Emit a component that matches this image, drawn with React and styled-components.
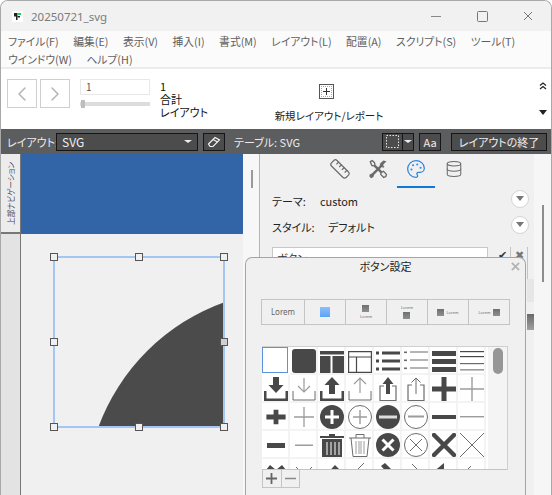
import React from 'react';
import styled, { createGlobalStyle } from 'styled-components';
import { ChevronLeft, ChevronRight, Ruler, Palette, Database } from 'lucide-react';

const GlobalStyle = createGlobalStyle`
  html, body {
    margin: 0;
    padding: 0;
    background: #fff;
  }
  * {
    box-sizing: border-box;
  }
`;

const Window = styled.div`
  position: relative;
  width: 552px;
  height: 495px;
  overflow: hidden;
  display: flex;
  flex-direction: column;
  background: #fff;
  border-top: 1px solid #a8a8a8;
  border-left: 1px solid #a8a8a8;
  border-right: 1px solid #a8a8a8;
  border-radius: 8px 8px 0 0;
  font-family: "Noto Sans CJK JP", "Noto Sans", sans-serif;
  font-feature-settings: "palt";
  font-size: 11px;
  color: #222;
`;

const TitleBar = styled.div`
  height: 30px;
  flex: none;
  display: flex;
  align-items: center;
  padding-left: 11px;
  background: #f1f1f1;
`;

const AppTitle = styled.span`
  margin-left: 8px;
  font-family: "Noto Sans", sans-serif;
  font-size: 11.5px;
  color: #7b7b7b;
`;

const WindowControls = styled.div`
  margin-left: auto;
  display: flex;
`;

const WindowControl = styled.div`
  width: 46px;
  height: 30px;
  display: flex;
  align-items: center;
  justify-content: center;
`;

const MenuBar = styled.div`
  height: 38px;
  flex: none;
  padding: 1px 0 0 7px;
  display: flex;
  flex-wrap: wrap;
  align-content: flex-start;
  column-gap: 14.5px;
  background: #fbfbfb;
  border-bottom: 2px solid #ececec;
`;

const MenuItem = styled.span`
  font-size: 10.8px;
  line-height: 18px;
  color: #5f5f5f;
  white-space: nowrap;
`;

const MenuBreak = styled.span`
  flex-basis: 100%;
  height: 0;
`;

const Toolbar = styled.div`
  height: 60px;
  flex: none;
  display: flex;
  padding: 10px 0 0 6px;
  background: #fff;
`;

const NavButton = styled.div`
  width: 30px;
  height: 29px;
  margin-right: 3px;
  display: flex;
  align-items: center;
  justify-content: center;
  border: 1px solid #cfcfcf;
  color: #b4b4b4;
`;

const Pager = styled.div`
  width: 70px;
  margin-left: 7px;
`;

const PageInput = styled.div`
  height: 16px;
  padding-left: 5px;
  border: 1px solid #e8e8e8;
  font-size: 10px;
  line-height: 14px;
  color: #555;
`;

const Slider = styled.div`
  position: relative;
  height: 4px;
  margin-top: 7px;
  background: #dcdcdc;
`;

const SliderThumb = styled.div`
  position: absolute;
  left: 1px;
  top: -2px;
  width: 4px;
  height: 8px;
  background: #bdbdbd;
`;

const PageInfo = styled.div`
  width: 70px;
  margin-left: 10px;
  margin-top: 1px;
  font-size: 11px;
  line-height: 13px;
  color: #111;
`;

const NewLayout = styled.div`
  width: 110px;
  margin-left: 44px;
  display: flex;
  flex-direction: column;
  align-items: center;
  font-size: 10.5px;
  line-height: 16px;
  color: #222;
  white-space: nowrap;
`;

const NewLayoutIcon = styled.div`
  width: 15px;
  height: 15px;
  margin: 5px 5px 9px 0;
  display: flex;
  align-items: center;
  justify-content: center;
  border: 1px solid #555;
  outline: 1px dotted #aaa;
  outline-offset: -3px;
`;

const ToolbarEnd = styled.div`
  margin: 3px 0 0 auto;
  width: 16px;
  height: 33px;
  display: flex;
  flex-direction: column;
  justify-content: space-between;
  align-items: center;
`;

const LayoutBar = styled.div`
  height: 25px;
  flex: none;
  display: flex;
  align-items: center;
  padding: 0 4px 0 6px;
  background: #5b5d5f;
  color: #ececec;
  font-size: 11px;
`;

const DarkControl = styled.div`
  height: 18px;
  flex: none;
  width: ${(p) => p.$w}px;
  margin-left: ${(p) => p.$ml || 0}px;
  display: flex;
  align-items: center;
  justify-content: ${(p) => (p.$between ? 'space-between' : 'center')};
  padding: ${(p) => (p.$between ? '0 5px' : '0')};
  border: 1px solid #161616;
  background: #4c4c4c;
  color: #efefef;
  font-size: ${(p) => (p.$between ? 12 : 11)}px;
  white-space: nowrap;
`;

const BarLabel = styled.span`
  width: ${(p) => p.$w}px;
  flex: none;
  margin-left: ${(p) => p.$ml || 0}px;
  white-space: nowrap;
`;

const BarGroup = styled.div`
  margin-left: auto;
  display: flex;
`;

const Caret = styled.span`
  width: 0;
  height: 0;
  border-left: 4px solid transparent;
  border-right: 4px solid transparent;
  border-top: 3px solid #eee;
`;

const SplitCell = styled.span`
  height: 100%;
  width: ${(p) => p.$w}px;
  display: flex;
  align-items: center;
  justify-content: center;
  border-right: ${(p) => (p.$divided ? '1px solid #161616' : 'none')};
`;

const Workspace = styled.div`
  flex: 1;
  min-height: 0;
  display: flex;
`;

const Sidebar = styled.div`
  width: 20px;
  flex: none;
  display: flex;
  flex-direction: column;
  background: #e3e3e3;
  border-right: 1px solid #777;
`;

const SideTab = styled.div`
  height: 80px;
  flex: none;
  display: flex;
  align-items: center;
  justify-content: center;
  border-bottom: 2px solid #777;
  background: #ececec;
`;

const SideTabText = styled.span`
  writing-mode: vertical-rl;
  text-orientation: sideways;
  transform: rotate(180deg);
  font-size: 7.5px;
  line-height: 10px;
  color: #4a3a4a;
  white-space: nowrap;
`;

const Canvas = styled.div`
  width: 222px;
  flex: none;
  background: #f0f0f1;
`;

const HeaderPart = styled.div`
  height: 80px;
  background: #3264a8;
`;

const Selection = styled.div`
  position: relative;
  width: 172px;
  height: 172px;
  margin: 22px 0 0 32px;
`;

const ShapeSvg = styled.svg`
  display: block;
  width: 100%;
  height: 100%;
`;

const Handle = styled.span`
  position: absolute;
  left: ${(p) => p.$x}px;
  top: ${(p) => p.$y}px;
  width: 8px;
  height: 8px;
  margin: -4px 0 0 -4px;
  border: 1px solid #555;
  background: ${(p) => (p.$dim ? '#cfcfcf' : '#f0f0f1')};
`;

const Gutter = styled.div`
  width: 17px;
  flex: none;
  padding: 16px 0 0 8px;
  background: #f7f7f7;
  border-right: 1px solid #b5b5b5;
`;

const GutterThumb = styled.div`
  width: 2px;
  height: 18px;
  background: #9a9a9a;
`;

const Inspector = styled.div`
  flex: 1;
  display: flex;
  background: #f0f0f0;
`;

const Panel = styled.div`
  width: 274px;
  flex: none;
`;

const TabRow = styled.div`
  height: 34px;
  display: flex;
  justify-content: center;
`;

const Tab = styled.div`
  width: 38px;
  display: flex;
  align-items: center;
  justify-content: center;
  padding-bottom: 3px;
  color: ${(p) => (p.$active ? '#2c84e0' : '#6b6b6b')};
  border-bottom: 2px solid ${(p) => (p.$active ? '#0f78d8' : 'transparent')};
`;

const PropRow = styled.div`
  height: 26px;
  display: flex;
  align-items: center;
  padding: 0 5px 0 12px;
  font-size: 11px;
  color: #222;
`;

const PropLabel = styled.span`
  width: ${(p) => p.$w}px;
  flex: none;
`;

const RoundButton = styled.span`
  width: 18px;
  height: 18px;
  margin-left: auto;
  margin-top: -5px;
  display: flex;
  align-items: center;
  justify-content: center;
  border-radius: 50%;
  background: #fff;
  border: 1px solid #d4d4d4;
`;

const RoundCaret = styled.span`
  width: 0;
  height: 0;
  border-left: 4px solid transparent;
  border-right: 4px solid transparent;
  border-top: 5px solid #777;
`;

const NameRow = styled.div`
  display: flex;
  margin: 7px 0 0 12px;
  height: 24px;
`;

const NameInput = styled.div`
  width: 216px;
  height: 22px;
  padding: 2px 0 0 4px;
  background: #fff;
  border: 1px solid #c8c8c8;
  font-size: 11px;
  color: #333;
`;

const NameAction = styled.div`
  width: 17px;
  height: 32px;
  margin-left: ${(p) => p.$ml || 0}px;
  display: flex;
  justify-content: center;
  padding-top: 2px;
  border-right: 1px solid #c4c4c4;
  font-size: 11px;
  line-height: 11px;
  color: ${(p) => p.$color};
`;

const StripBehind = styled.div`
  margin: ${(p) => p.$mt}px 0 0 267px;
  width: 8px;
  height: ${(p) => p.$h}px;
  background: ${(p) => p.$bg};
`;

const OuterScroll = styled.div`
  flex: 1;
  padding: 51px 0 0 8px;
  background: #f6f6f6;
`;

const OuterThumb = styled.div`
  width: 2px;
  height: 77px;
  background: #8d8d8d;
`;

const Dialog = styled.div`
  position: absolute;
  left: 244px;
  top: 256px;
  width: 281px;
  height: 240px;
  padding: 0 15px;
  background: #f0f0f0;
  border: 1px solid #a5a5a5;
  border-bottom: none;
  border-radius: 7px 7px 0 0;
`;

const DialogHeader = styled.div`
  position: relative;
  height: 41px;
  margin-top: -1px;
  padding-top: 0;
  text-align: center;
  font-size: 11px;
  line-height: 18px;
  color: #222;
`;

const DialogClose = styled.span`
  position: absolute;
  right: -10px;
  top: 5px;
  display: flex;
`;

const PresetRow = styled.div`
  width: 249px;
  height: 26px;
  margin-top: 1px;
  display: flex;
  border: 1px solid #c4c4c4;
`;

const Preset = styled.div`
  flex: ${(p) => (p.$wide ? '43' : '41')} 0 0;
  display: flex;
  flex-direction: ${(p) => p.$dir};
  align-items: center;
  justify-content: center;
  gap: 2px;
  border-left: ${(p) => (p.$first ? 'none' : '1px solid #c4c4c4')};
`;

const PresetLabel = styled.span`
  font-family: "Noto Sans", sans-serif;
  font-size: ${(p) => (p.$big ? 8 : 4)}px;
  line-height: ${(p) => (p.$big ? 10 : 5)}px;
  color: #666;
`;

const PresetSwatch = styled.span`
  display: block;
  width: ${(p) => (p.$blue ? 10 : 7)}px;
  height: ${(p) => (p.$blue ? 10 : 7)}px;
  background: ${(p) =>
    p.$blue
      ? 'linear-gradient(#8cc0fb, #5da2f5)'
      : 'linear-gradient(#6f6f6f, #8f8f8f)'};
`;

const IconPicker = styled.div`
  display: flex;
  width: 246px;
  height: 124px;
  margin: 21px 0 0 1px;
  border-top: 1px solid #d0d0d0;
  border-right: 1px solid #d0d0d0;
  border-bottom: 1px solid #c4c4c4;
  overflow: hidden;
`;

const IconGrid = styled.div`
  width: 226px;
  flex: none;
  display: grid;
  grid-template-columns: repeat(8, 28px);
  grid-auto-rows: 28px;
  align-content: start;
  background: #fff;
`;

const IconCell = styled.div`
  display: flex;
  align-items: flex-end;
  justify-content: flex-end;
  background: #fff;
  border-right: 2px solid #f3f3f3;
  border-bottom: 2px solid #f3f3f3;
  ${(p) => p.$selected && 'box-shadow: inset 0 0 0 1px #5b94dc; border-color: #fff;'}
`;

const PickerScroll = styled.div`
  flex: 1;
  padding: 1px 0 0 5px;
  background: #f4f4f4;
`;

const PickerThumb = styled.div`
  width: 10px;
  height: 26px;
  border-radius: 5px;
  background: #969696;
`;

const StepperRow = styled.div`
  display: flex;
  width: 38px;
  height: 18px;
  margin-left: 1px;
  border: 1px solid #c4c4c4;
  border-top: none;
`;

const Stepper = styled.div`
  flex: 1;
  display: flex;
  align-items: center;
  justify-content: center;
  border-left: ${(p) => (p.$divided ? '1px solid #c4c4c4' : 'none')};
`;

const DARK = '#484848';
const THIN = '#6c6c6c';
const GREY = '#9c9c9c';

const bars = (color, h, ys) => ys.map((y) => <rect key={y} x="0" y={y} width="24" height={h} fill={color} />);

const listLines = (h) =>
  [3, 11, 19].map((y) => (
    <g key={y} fill={h > 1 ? DARK : THIN}>
      <rect x="0" y={y - 0.5} width="3" height={h > 1 ? 3 : 1.6} />
      <rect x="6" y={y - 0.5} width="18" height={h} />
    </g>
  ));

const tray = (color, w) => (
  <path d="M1 14v9h22v-9" fill="none" stroke={color} strokeWidth={w} strokeLinejoin="miter" />
);

const crossIn = (color, w) => (
  <path d="M12 5v14M5 12h14" stroke={color} strokeWidth={w} fill="none" />
);

const glyphs = [
  null,
  <rect key="a" x="0" y="0" width="24" height="24" rx="3" fill={DARK} />,
  <path key="a" fill={DARK} d="M0 2h24v3.500H0zM0 7h10.500v17H0zM12.500 7H24v17H12.500z" />,
  <path key="a" fill="none" stroke={DARK} strokeWidth="1.200" d="M.6 2.600h22.800v20.800H.6zM.6 8h22.800M8.500 8v15.400" />,
  <g key="a">{listLines(3)}</g>,
  <g key="a">{listLines(1)}</g>,
  <g key="a">{bars(DARK, 5, [2, 10, 18])}</g>,
  <g key="a">{bars(DARK, 1.200, [2, 7])}{bars(THIN, 1.200, [14])}{bars(GREY, 1.600, [20])}</g>,

  <g key="a">{tray(DARK, 3)}<path fill={DARK} d="M9 0h6v8h4.500L12 16 4.500 8H9z" /></g>,
  <g key="a">{tray(THIN, 1)}<path fill="none" stroke={GREY} strokeWidth="1.200" d="M12 1v14M6 9l6 6 6-6" /></g>,
  <g key="a">{tray(DARK, 3)}<path fill={DARK} d="M9 17h6V8h4.500L12 0 4.500 8H9z" /></g>,
  <g key="a">{tray(THIN, 1)}<path fill="none" stroke={GREY} strokeWidth="1.200" d="M12 16V1M6 7l6-6 6 6" /></g>,
  <g key="a"><path fill="none" stroke={THIN} strokeWidth="1.200" d="M8 9H4v14.500h16V9h-4" /><path fill={DARK} d="M10 17h4V7h3.500L12 0 6.500 7H10z" /></g>,
  <g key="a"><path fill="none" stroke={THIN} strokeWidth="1.200" d="M8 8H4v15.500h16V8h-4" /><path fill="none" stroke={THIN} strokeWidth="1" d="M12 17V1M7.500 5.500 12 1l4.500 4.500" /></g>,
  <path key="a" fill={DARK} d="M9.500 0h5v9.500H24v5h-9.500V24h-5v-9.500H0v-5h9.500z" />,
  <path key="a" stroke={GREY} strokeWidth="1.400" d="M12 0v24M0 12h24" />,

  <path key="a" fill={DARK} d="M9 3h6v6h9v6h-9v6H9v-6H0V9h9z" transform="translate(2.400 2.400) scale(.8)" />,
  <path key="a" stroke={GREY} strokeWidth="1.300" d="M12 2v20M2 12h20" />,
  <g key="a"><circle cx="12" cy="12" r="12" fill={DARK} />{crossIn('#fff', 3)}</g>,
  <g key="a"><circle cx="12" cy="12" r="11.500" fill="#fff" stroke={THIN} />{crossIn(GREY, 1.400)}</g>,
  <g key="a"><circle cx="12" cy="12" r="12" fill={DARK} /><rect x="3" y="10.500" width="18" height="3" fill="#ddd" /></g>,
  <g key="a"><circle cx="12" cy="12" r="11.500" fill="#fff" stroke={THIN} /><rect x="4" y="10.500" width="16" height="2" fill={GREY} /></g>,
  <rect key="a" x="0" y="10" width="24" height="4" fill={DARK} />,
  <rect key="a" x="0" y="11" width="24" height="1.400" fill={GREY} />,

  <rect key="a" x="3" y="10" width="18" height="5" fill={DARK} />,
  <rect key="a" x="3" y="11.500" width="18" height="1.500" fill={GREY} />,
  <g key="a"><path fill={DARK} d="M0 3h9V1h6v2h9v2H0z" /><path fill={DARK} d="M2 6h20v18H2z" /><path stroke="#fff" strokeWidth="1" d="M7 9v13M11 9v13M15 9v13M19 9v13" /></g>,
  <g key="a"><path fill="none" stroke={THIN} strokeWidth="1" d="M1 5h22M8 5V1.500h8V5M3 5l2 18.500h14L21 5" /><path stroke={GREY} strokeWidth="1" d="M8 8v13M11 8v13M13 8v13M16 8v13" /></g>,
  <g key="a"><circle cx="12" cy="12" r="12" fill={DARK} /><path stroke="#fff" strokeWidth="3" d="m6.500 6.500 11 11M17.500 6.500l-11 11" /></g>,
  <g key="a"><circle cx="12" cy="12" r="11.500" fill="#fff" stroke={THIN} /><path stroke={THIN} strokeWidth="1" d="m6 6 12 12M18 6 6 18" /></g>,
  <path key="a" stroke={DARK} strokeWidth="4.500" strokeLinecap="round" d="m2 2 20 20M22 2 2 22" />,
  <path key="a" stroke={THIN} strokeWidth="1" d="m0 0 24 24M24 0 0 24" />,

  <path key="a" fill={DARK} d="M2 9 6 4l6 5 6-5 4 5v6H2z" />,
  <path key="a" fill="none" stroke={THIN} d="m4 6 8 8 8-8" />,
  <path key="a" fill={DARK} d="M3 17 15 4l4 4-9 9z" />,
  <path key="a" fill="none" stroke={THIN} d="M4 14 16 2" />,
  <path key="a" fill={DARK} d="m5 5 4-3 12 12-4 4z" />,
  <path key="a" fill="none" stroke={THIN} d="m8 3 12 12" />,
  <path key="a" fill={DARK} d="M12 2v10H0zM12 10h12v3H12z" />,
  <path key="a" fill="none" stroke={THIN} d="m4 12 7-7" />,
];

const GridIcon = ({ children }) => (
  <svg width="24" height="24" viewBox="0 0 24 24" style={{ display: 'block' }}>{children}</svg>
);

const ToolsIcon = () => (
  <svg width="20" height="20" viewBox="0 0 26 26" fill="none" stroke="#6b6b6b" strokeWidth="1.800" strokeLinejoin="round">
    <path d="M3 3.500 5.500 2l3 3 .5 3 9 9 2-1 4 4-1 3-2.500 1-4-4 .5-2-9-9-3-.5z" />
    <path d="m16 5.500 4-3.500 4 1-4 4v2l1.500 1-1.500 1.500-2-1-10 10-1 3-3 1.500-2-2L2 20l3-1L15 9z" fill="#6b6b6b" stroke="none" />
  </svg>
);

const PencilIcon = () => (
  <svg width="14" height="12" viewBox="0 0 14 12" fill="none" stroke="#f2f2f2" strokeWidth="1.200">
    <path d="M1.500 8 8 1.500 12.500 4 6 10.500H3z" />
    <path d="M6 3.500 10.500 6" />
  </svg>
);

const AppIcon = () => (
  <svg width="11" height="11" viewBox="0 0 11 11">
    <rect width="11" height="11" fill="#fff" />
    <path d="M2 2h3.500v7H4V5.500H2z" fill="#222" />
    <path d="M5.500 2H9v2H5.500z" fill="#27d05a" />
    <path d="M5.500 5H8v1.500H5.500z" fill="#222" />
  </svg>
);

const SmallX = ({ color, size = 10, width = 1.800 }) => (
  <svg width={size} height={size} viewBox="0 0 10 10" stroke={color} strokeWidth={width}>
    <path d="m1 1 8 8M9 1 1 9" />
  </svg>
);

const menus = [
  'ファイル(F)', '編集(E)', '表示(V)', '挿入(I)', '書式(M)', 'レイアウト(L)', '配置(A)', 'スクリプト(S)', 'ツール(T)',
];

const handles = [
  [1, 1], [86, 1], [171, 1],
  [1, 86], [171, 86, true],
  [1, 171], [86, 171], [171, 171],
];

const presets = [
  { dir: 'column', label: 'big' },
  { dir: 'column', blue: true },
  { dir: 'column', order: 'icon' },
  { dir: 'column', order: 'text' },
  { dir: 'row', order: 'icon' },
  { dir: 'row', order: 'text' },
];

const App = () => (
  <>
    <GlobalStyle />
    <Window>
      <TitleBar>
        <AppIcon />
        <AppTitle>20250721_svg</AppTitle>
        <WindowControls>
          <WindowControl>
            <svg width="10" height="10" stroke="#888"><path d="M0 5.500h10" /></svg>
          </WindowControl>
          <WindowControl>
            <svg width="11" height="11" fill="none" stroke="#777"><rect x=".5" y=".5" width="10" height="10" rx="1" /></svg>
          </WindowControl>
          <WindowControl>
            <SmallX color="#777" width={1} />
          </WindowControl>
        </WindowControls>
      </TitleBar>

      <MenuBar>
        {menus.map((m) => <MenuItem key={m}>{m}</MenuItem>)}
        <MenuBreak />
        <MenuItem>ウインドウ(W)</MenuItem>
        <MenuItem>ヘルプ(H)</MenuItem>
      </MenuBar>

      <Toolbar>
        <NavButton><ChevronLeft size={24} strokeWidth={1.500} /></NavButton>
        <NavButton><ChevronRight size={24} strokeWidth={1.500} /></NavButton>
        <Pager>
          <PageInput>1</PageInput>
          <Slider><SliderThumb /></Slider>
        </Pager>
        <PageInfo>
          1<br />合計<br />レイアウト
        </PageInfo>
        <NewLayout>
          <NewLayoutIcon>
            <svg width="7" height="7" stroke="#333"><path d="M3.500 0v7M0 3.500h7" /></svg>
          </NewLayoutIcon>
          新規レイアウト/レポート
        </NewLayout>
        <ToolbarEnd>
          <svg width="8" height="8" fill="none" stroke="#222" strokeWidth="1.200"><path d="m1 3.500 3-2.500 3 2.500M1 7l3-2.500L7 7" /></svg>
          <svg width="8" height="5" fill="#222"><path d="M0 0h8L4 5z" /></svg>
        </ToolbarEnd>
      </Toolbar>

      <LayoutBar>
        <BarLabel $w={49}>レイアウト:</BarLabel>
        <DarkControl $w={142} $between>
          <span>SVG</span>
          <Caret />
        </DarkControl>
        <DarkControl $w={22} $ml={5}><PencilIcon /></DarkControl>
        <BarLabel $w={70} $ml={9}>テーブル: SVG</BarLabel>
        <BarGroup>
          <DarkControl $w={32}>
            <SplitCell $w={20} $divided>
              <svg width="13" height="13" fill="none" stroke="#e6e6e6" strokeDasharray="1.500 1.500"><rect x=".5" y=".5" width="12" height="12" /></svg>
            </SplitCell>
            <SplitCell $w={10}><Caret /></SplitCell>
          </DarkControl>
          <DarkControl $w={22} $ml={5}>Aa</DarkControl>
          <DarkControl $w={96} $ml={10}>レイアウトの終了</DarkControl>
        </BarGroup>
      </LayoutBar>

      <Workspace>
        <Sidebar>
          <SideTab>
            <SideTabText>上部ナビゲーション</SideTabText>
          </SideTab>
        </Sidebar>

        <Canvas>
          <HeaderPart />
          <Selection>
            <ShapeSvg viewBox="0 0 172 172">
              <path d="M45 172A210 210 0 0 1 172 46V172Z" fill="#4b4b4b" />
              <rect x="1" y="1" width="170" height="170" fill="none" stroke="#a3c6f2" strokeWidth="2" />
            </ShapeSvg>
            {handles.map(([x, y, dim]) => <Handle key={`${x}-${y}`} $x={x} $y={y} $dim={dim} />)}
          </Selection>
        </Canvas>

        <Gutter><GutterThumb /></Gutter>

        <Inspector>
          <Panel>
            <TabRow>
              <Tab><Ruler size={22} strokeWidth={1.300} /></Tab>
              <Tab><ToolsIcon /></Tab>
              <Tab $active><Palette size={20} strokeWidth={1.500} /></Tab>
              <Tab><Database size={18} strokeWidth={1.400} /></Tab>
            </TabRow>
            <PropRow>
              <PropLabel $w={48}>テーマ:</PropLabel>
              custom
              <RoundButton><RoundCaret /></RoundButton>
            </PropRow>
            <PropRow>
              <PropLabel $w={56}>スタイル:</PropLabel>
              デフォルト
              <RoundButton><RoundCaret /></RoundButton>
            </PropRow>
            <NameRow>
              <NameInput>ボタン</NameInput>
              <NameAction $ml={6} $color="#333">✔</NameAction>
              <NameAction $color="#777">✖</NameAction>
            </NameRow>
            <StripBehind $mt={8} $h={23} $bg="#e6e6e6" />
            <StripBehind $mt={12} $h={16} $bg="linear-gradient(#6a6a6a, #a0a0a0)" />
          </Panel>
          <OuterScroll><OuterThumb /></OuterScroll>
        </Inspector>
      </Workspace>

      <Dialog>
        <DialogHeader>
          ボタン設定
          <DialogClose><SmallX color="#b4b4b4" size={9} width={2} /></DialogClose>
        </DialogHeader>
        <PresetRow>
          {presets.map((p, i) => {
            const label = <PresetLabel $big={p.label === 'big'}>Lorem</PresetLabel>;
            const swatch = <PresetSwatch $blue={p.blue} />;
            return (
              <Preset key={i} $dir={p.dir} $first={i === 0} $wide={i === 0}>
                {p.label === 'big' && label}
                {p.blue && swatch}
                {p.order === 'icon' && <>{swatch}{label}</>}
                {p.order === 'text' && <>{label}{swatch}</>}
              </Preset>
            );
          })}
        </PresetRow>
        <IconPicker>
          <IconGrid>
            {glyphs.map((g, i) => (
              <IconCell key={i} $selected={i === 0}>
                {g && <GridIcon>{g}</GridIcon>}
              </IconCell>
            ))}
          </IconGrid>
          <PickerScroll><PickerThumb /></PickerScroll>
        </IconPicker>
        <StepperRow>
          <Stepper>
            <svg width="11" height="11" stroke="#666" strokeWidth="1.800"><path d="M5.500 0v11M0 5.500h11" /></svg>
          </Stepper>
          <Stepper $divided>
            <svg width="11" height="11" stroke="#888" strokeWidth="1.500"><path d="M0 5.500h11" /></svg>
          </Stepper>
        </StepperRow>
      </Dialog>
    </Window>
  </>
);

export default App;
